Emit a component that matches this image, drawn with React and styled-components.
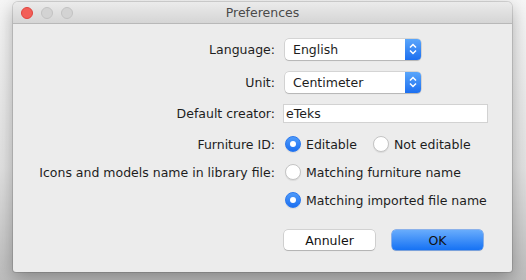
import React from 'react'
import styled, { createGlobalStyle } from 'styled-components'

const Global = createGlobalStyle`
	html, body {
		margin: 0;
		padding: 0;
		background: linear-gradient(#f6f6f6, #e2e2e2 60%, #bdbdbd);
		font-family: 'DejaVu Sans', Verdana, sans-serif;
		font-size: 12.5px;
		color: #1d1d1d;
	}
	body {
		width: 526px;
		height: 280px;
		overflow: hidden;
	}
`

const Window = styled.div`
	margin: 2px 0 0 13px;
	width: 499px;
	height: 270px;
	background: #ececec;
	border-radius: 5px 5px 3px 3px;
	box-shadow: 0 0 0 1px rgba(0, 0, 0, 0.12), 0 6px 18px rgba(0, 0, 0, 0.3);
	display: flex;
	flex-direction: column;
	overflow: hidden;
`

const TitleBar = styled.div`
	height: 21px;
	flex: none;
	display: flex;
	align-items: center;
	position: relative;
	background: linear-gradient(#ebebeb, #d5d5d5);
	border-bottom: 1px solid #b8b8b8;
`

const Lights = styled.div`
	display: flex;
	gap: 8px;
	padding-left: 8px;
`

const Light = styled.span`
	width: 12px;
	height: 12px;
	border-radius: 50%;
	box-sizing: border-box;
	background: ${p => (p.$red ? '#f25f58' : '#d3d3d3')};
	border: 1px solid ${p => (p.$red ? '#e0443e' : '#c2c2c2')};
`

const Title = styled.div`
	position: absolute;
	left: 0;
	right: 0;
	text-align: center;
	color: #4a4a4a;
	font-size: 12.5px;
	pointer-events: none;
`

const Form = styled.div`
	display: grid;
	grid-template-columns: 262px 1fr;
	column-gap: 8px;
	padding-top: 14px;
`

const Label = styled.div`
	grid-column: 1;
	height: ${p => p.$h}px;
	margin-bottom: ${p => p.$mb}px;
	display: flex;
	align-items: center;
	justify-content: flex-end;
	white-space: nowrap;
`

const Cell = styled.div`
	grid-column: 2;
	height: ${p => p.$h}px;
	margin-bottom: ${p => p.$mb}px;
	display: flex;
	align-items: center;
	gap: ${p => p.$gap || 0}px;
	padding-left: ${p => p.$pl || 0}px;
	white-space: nowrap;
`

const Combo = styled.div`
	width: 136px;
	height: 21px;
	margin-left: 2px;
	box-sizing: border-box;
	display: flex;
	background: #fff;
	border-radius: 4px;
	box-shadow: 0 0 0 0.5px rgba(0, 0, 0, 0.2), 0 1px 1px rgba(0, 0, 0, 0.15);
	overflow: hidden;
`

const ComboText = styled.div`
	flex: 1;
	padding-left: 8px;
	line-height: 21px;
`

const Stepper = styled.div`
	width: 16px;
	background: linear-gradient(#5aa6fb, #1c6ff0);
	display: flex;
	align-items: center;
	justify-content: center;
`

const TextField = styled.div`
	width: 205px;
	height: 19px;
	box-sizing: border-box;
	background: #fff;
	border: 1px solid #d2d2d2;
	padding-left: 2px;
	line-height: 17px;
`

const RadioLabel = styled.label`
	display: flex;
	align-items: center;
	gap: 5px;
`

const Dot = styled.span`
	width: 16px;
	height: 16px;
	box-sizing: border-box;
	border-radius: 50%;
	display: flex;
	align-items: center;
	justify-content: center;
	background: ${p => (p.$on ? 'linear-gradient(#4f9bfa, #1b6ff1)' : '#fff')};
	border: 1px solid ${p => (p.$on ? '#2a78ee' : '#c4c4c4')};
	box-shadow: 0 1px 1px rgba(0, 0, 0, 0.08);

	&::after {
		content: '';
		display: ${p => (p.$on ? 'block' : 'none')};
		width: 6px;
		height: 6px;
		border-radius: 50%;
		background: #fff;
	}
`

const Buttons = styled.div`
	grid-column: 2;
	margin-top: 20px;
	display: flex;
	gap: 17px;
	padding-left: 1px;
`

const Button = styled.div`
	width: 91px;
	height: 20px;
	box-sizing: border-box;
	border-radius: 4px;
	display: flex;
	align-items: center;
	justify-content: center;
	background: ${p => (p.$primary ? 'linear-gradient(#68acfc, #1672f4)' : '#fff')};
	box-shadow: ${p =>
		p.$primary
			? '0 0 0 0.5px #2a76e8, 0 1px 1px rgba(0,0,0,0.15)'
			: '0 0 0 0.5px rgba(0,0,0,0.22), 0 1px 1px rgba(0,0,0,0.15)'};
	color: #111;
`

const Chevrons = () => (
	<svg width="10" height="14" viewBox="0 0 10 14">
		<path d="M2 5.5 L5 2.5 L8 5.5 M2 8.5 L5 11.5 L8 8.5" fill="none" stroke="#fff" strokeWidth="1.5" />
	</svg>
)

const Radio = ({ on, children }) => (
	<RadioLabel>
		<Dot $on={on} />
		{children}
	</RadioLabel>
)

const App = () => (
	<>
		<Global />
		<Window>
			<TitleBar>
				<Lights>
					<Light $red />
					<Light />
					<Light />
				</Lights>
				<Title>Preferences</Title>
			</TitleBar>
			<Form>
				<Label $h={22} $mb={11}>Language:</Label>
				<Cell $h={22} $mb={11}>
					<Combo>
						<ComboText>English</ComboText>
						<Stepper><Chevrons /></Stepper>
					</Combo>
				</Cell>

				<Label $h={22} $mb={11}>Unit:</Label>
				<Cell $h={22} $mb={11}>
					<Combo>
						<ComboText>Centimeter</ComboText>
						<Stepper><Chevrons /></Stepper>
					</Combo>
				</Cell>

				<Label $h={19} $mb={11}>Default creator:</Label>
				<Cell $h={19} $mb={11}>
					<TextField>eTeks</TextField>
				</Cell>

				<Label $h={20} $mb={8}>Furniture ID:</Label>
				<Cell $h={20} $mb={8} $gap={16} $pl={2}>
					<Radio on>Editable</Radio>
					<Radio>Not editable</Radio>
				</Cell>

				<Label $h={20} $mb={8}>Icons and models name in library file:</Label>
				<Cell $h={20} $mb={8} $pl={2}>
					<Radio>Matching furniture name</Radio>
				</Cell>

				<Cell $h={20} $mb={0} $pl={2}>
					<Radio on>Matching imported file name</Radio>
				</Cell>

				<Buttons>
					<Button>Annuler</Button>
					<Button $primary>OK</Button>
				</Buttons>
			</Form>
		</Window>
	</>
)

export default App
